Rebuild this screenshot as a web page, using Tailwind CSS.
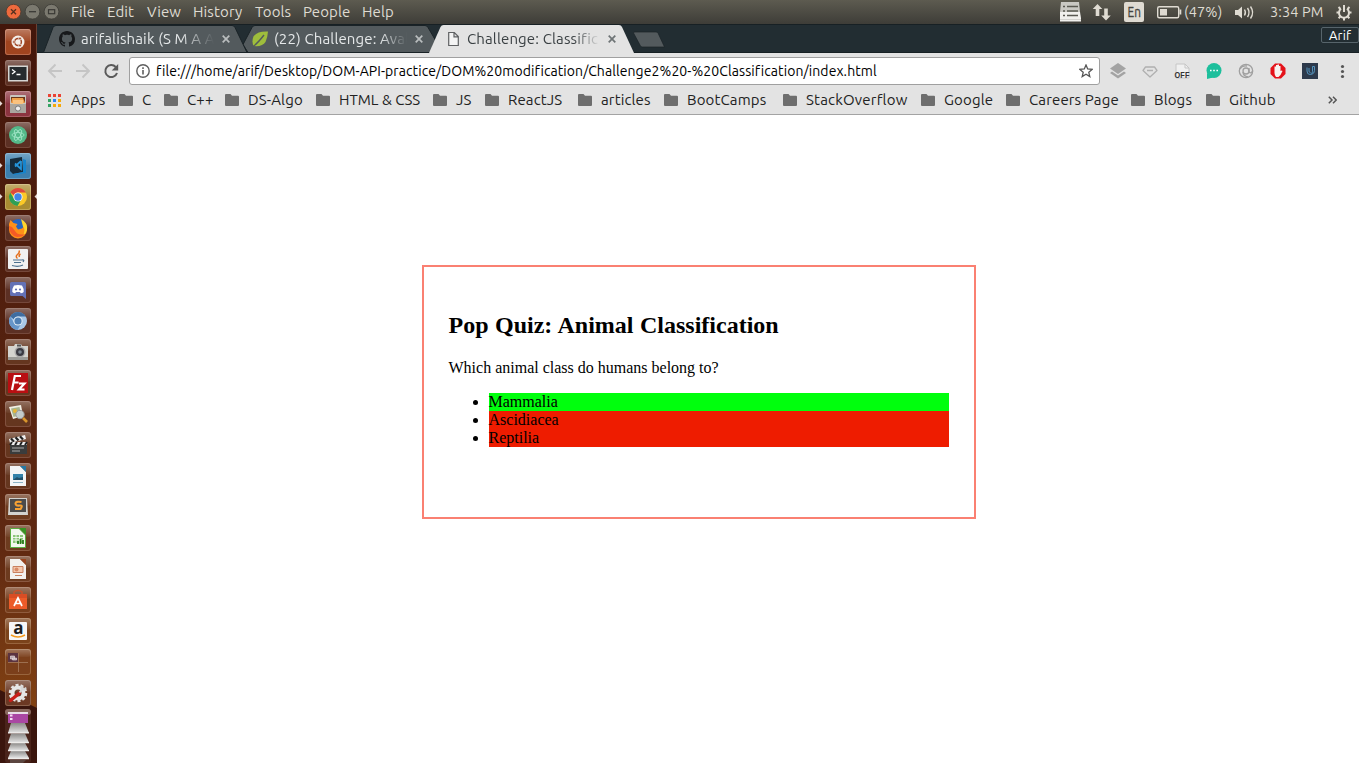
<!DOCTYPE html>
<html lang="en">
<head>
<meta charset="utf-8">
<title>Challenge: Classification</title>
<script src="https://cdn.jsdelivr.net/npm/@tailwindcss/browser@4"></script>
</head>
<body class="w-[1359px] h-[763px] overflow-hidden flex flex-col bg-white font-['Ubuntu','Noto_Sans',sans-serif] text-[15px] tracking-[0.13px] whitespace-nowrap">
<svg class="absolute size-0">
  <defs>
    <symbol id="folder" viewBox="0 0 14 12"><path d="M1 0h4.5L7 1.8h6a1 1 0 0 1 1 1V11a1 1 0 0 1-1 1H1a1 1 0 0 1-1-1V1a1 1 0 0 1 1-1z" fill="#6e6e6e"/></symbol>
    <symbol id="close" viewBox="0 0 8 8"><path d="M.7.7l6.6 6.6M7.3.7L.7 7.3" stroke="currentColor" stroke-width="1.7"/></symbol>
    <linearGradient id="shine" x1="0" y1="0" x2="0" y2="1"><stop offset="0" stop-color="#fff" stop-opacity=".3"/><stop offset="1" stop-color="#fff" stop-opacity=".04"/></linearGradient>
    <linearGradient id="paper" x1="0" y1="0" x2="0" y2="1"><stop offset="0" stop-color="#8c8a88"/><stop offset="1" stop-color="#e4e4e4"/></linearGradient>
  </defs>
</svg>

<!-- Top panel -->
<header class="h-6 shrink-0 flex items-center bg-linear-to-b from-[#5d5b50] to-[#3e3d38] text-[#dfdbd2] leading-6">
  <svg class="w-[71px] h-6 shrink-0" viewBox="0 0 71 24">
    <circle cx="13.5" cy="11.7" r="7.4" fill="#ee6a3d" stroke="#4a3a30" stroke-width=".8"/><path d="M11 9.2l5 5M16 9.2l-5 5" stroke="#54301f" stroke-width="1.3"/>
    <circle cx="32.5" cy="11.7" r="7.4" fill="#7b796f" stroke="#3b3a35" stroke-width=".8"/><path d="M29 11.7h7" stroke="#3a3935" stroke-width="1.3"/>
    <circle cx="51.5" cy="11.7" r="7.4" fill="#7b796f" stroke="#3b3a35" stroke-width=".8"/><rect x="48.5" y="9.7" width="6.2" height="4" fill="none" stroke="#3a3935" stroke-width="1.2"/>
  </svg>
  <span class="w-9">File</span><span class="w-10">Edit</span><span class="w-[46px]">View</span><span class="w-[62px]">History</span><span class="w-12">Tools</span><span class="w-[59px]">People</span><span>Help</span>
  <div class="ml-auto flex items-center text-[14.5px]">
    <svg class="w-[124px] h-6" viewBox="1059 0 124 24">
      <path d="M1061 2h18l1 10h-20z" fill="#c9c8c3"/><path d="M1060 12h20l1 6v3.500h-21z" fill="#f1f0ed"/><path d="M1063 6.500h2M1067 6.500h11M1063 11h2M1067 11h11M1063 15.500h2M1067 15.500h11" stroke="#5a5952" stroke-width="1.500"/><path d="M1060 19.500h21" stroke="#d4d3cf"/>
      <path d="M1097.500 4l4.800 5h-3v7h-3.600V9h-3zM1106 20.500l-4.800-5h3V8.500h3.600v7h3z" fill="#dfdbd2"/>
      <rect x="1124" y="2" width="20" height="20" rx="2" fill="#dfdbd2"/>
      <text x="1127.500" y="17" font-size="14" fill="#45443e" stroke="#45443e" stroke-width=".3" textLength="13.500" lengthAdjust="spacingAndGlyphs">En</text>
      <rect x="1157.700" y="6.700" width="21" height="11" rx="1.500" fill="none" stroke="#dfdbd2" stroke-width="1.400"/><path d="M1160 9h7v6.500h-7zM1179.500 9.500h1.800v5h-1.800z" fill="#dfdbd2"/>
    </svg>
    <span class="w-[51px] pl-px">(47%)</span>
    <svg class="w-[22px] h-6" viewBox="1234 0 22 24"><path d="M1235 10h3l4-3.500v12l-4-3.500h-3z" fill="#dfdbd2"/><path d="M1244.500 9.500q1.800 3 0 6M1247.500 8q3 4.500 0 9M1250.500 6.500q4.200 6 0 12" fill="none" stroke="#dfdbd2" stroke-width="1.400"/></svg>
    <span class="w-[80px] pl-[14px]">3:34 PM</span>
    <svg class="w-[23px] h-6" viewBox="1336 0 23 24"><g fill="none" stroke="#dfdbd2"><path d="M1341 8.800a5 5 0 1 0 6 0" stroke-width="2"/><path d="M1344 5v7M1339.500 12.500h-3M1351.500 12.500h-3M1340.800 16l-2.200 2.200M1347.200 16l2.200 2.200M1344 17.500v3M1340.500 9l-2-2M1347.500 9l2-2" stroke-width="2"/></g></svg>
  </div>
</header>

<div class="flex flex-1 min-h-0">
  <!-- Launcher -->
  <nav class="relative w-[37px] shrink-0 flex flex-col items-start pl-[5px] pt-[5px] gap-[5px] bg-linear-to-b from-[#43160b] via-[#5f2811] via-70% to-[#8d4a12] border-r border-[#6b4032]">
    <svg class="absolute left-0 top-[666px] w-[37px] h-[73px]" viewBox="0 0 37 73"><path d="M0 0L37 18V73H0z" fill="#3a150d"/></svg>
    <svg class="absolute left-0 top-0 w-[37px] h-[200px]" viewBox="0 24 37 200"><path d="M0 101l2.500 2.500L0 106zM0 163l2.500 2.500L0 168zM0 194l2.500 2.500L0 199zM37 194l-2.500 2.500L37 199z" fill="#e8dcd8"/></svg>

    <div class="relative size-[26px] rounded-[3px] bg-[#a0441f] shadow-[inset_0_0_0_1px_#b96a4c]"><svg viewBox="0 0 26 26"><rect width="26" height="12" rx="3" fill="url(#shine)"/><circle cx="13" cy="13" r="6.500" fill="#f4eee9"/><circle cx="13" cy="13" r="3.400" fill="none" stroke="#a04727" stroke-width="1.500"/><g fill="#a04727" stroke="#f4eee9" stroke-width=".7"><circle cx="9" cy="13" r="1.400"/><circle cx="15" cy="9.500" r="1.400"/><circle cx="15" cy="16.500" r="1.400"/></g></svg></div>
    <div class="relative size-[26px] rounded-[3px] bg-[#5c3024] shadow-[inset_0_0_0_1px_#75483b]"><svg viewBox="0 0 26 26"><rect width="26" height="12" rx="3" fill="url(#shine)"/><rect x="3" y="5.500" width="20" height="16" fill="#d5d5d2"/><rect x="4.500" y="7" width="17" height="13" fill="#262b2e"/><path d="M7 9.500l3 2.200L7 13.900M11.500 14.500h4" fill="none" stroke="#fff" stroke-width="1.300"/></svg></div>
    <div class="relative size-[26px] rounded-[3px] bg-[#8c3440] shadow-[inset_0_0_0_1px_#a55a62]"><svg viewBox="0 0 26 26"><rect width="26" height="12" rx="3" fill="url(#shine)"/><rect x="5" y="4" width="16" height="18" rx="1" fill="#c9c5bf"/><path d="M6 6h14v6H6z" fill="#6b3518"/><path d="M7 7h11l2 5H6z" fill="#f0a04b"/><path d="M8 9h10v4H8z" fill="#fac27e"/><rect x="5" y="13" width="16" height="9" fill="#aaa69f"/><circle cx="13" cy="17.500" r="2.600" fill="#eee" stroke="#777"/></svg></div>
    <div class="relative size-[26px] rounded-[3px] bg-[#5c3024] shadow-[inset_0_0_0_1px_#75483b]"><svg viewBox="0 0 26 26"><rect width="26" height="12" rx="3" fill="url(#shine)"/><circle cx="13" cy="13" r="9" fill="#54b989"/><g fill="none" stroke="#a5e7ca" stroke-width=".8"><ellipse cx="13" cy="13" rx="6" ry="2.500"/><ellipse cx="13" cy="13" rx="6" ry="2.500" transform="rotate(60 13 13)"/><ellipse cx="13" cy="13" rx="6" ry="2.500" transform="rotate(120 13 13)"/></g></svg></div>
    <div class="relative size-[26px] rounded-[3px] bg-[#3c7fae] shadow-[inset_0_0_0_1px_#669dc1]"><svg viewBox="0 0 26 26"><rect width="26" height="12" rx="3" fill="url(#shine)"/><path d="M5 6l12-2 1 15-10 2-3-3z" fill="#162b3b"/><path d="M18 6l3 1v13l-12 2-1-1 10-2z" fill="#1684cc"/><path d="M16 8v8l-6-5.500M16 8l-6 5.500" fill="none" stroke="#2595db" stroke-width="1.700"/></svg></div>
    <div class="relative size-[26px] rounded-[3px] bg-[#a98c32] shadow-[inset_0_0_0_1px_#c0a75a]"><svg viewBox="0 0 26 26"><rect width="26" height="12" rx="3" fill="url(#shine)"/><circle cx="13" cy="13" r="9" fill="#fbc927"/><path d="M5.200 8.500A9 9 0 0 1 20.800 8.500H13a4.500 4.500 0 0 0-4 3z" fill="#dd4a3e"/><path d="M5.200 8.500A9 9 0 0 0 12.500 22l4-6.800a4.500 4.500 0 0 1-7.300-.2z" fill="#2f9f55"/><circle cx="13" cy="13" r="4.600" fill="#f5f5f5"/><circle cx="13" cy="13" r="3.700" fill="#4285e8"/></svg></div>
    <div class="relative size-[26px] rounded-[3px] bg-[#5c3024] shadow-[inset_0_0_0_1px_#75483b]"><svg viewBox="0 0 26 26"><rect width="26" height="12" rx="3" fill="url(#shine)"/><circle cx="13.500" cy="12.500" r="8.500" fill="#2765c0"/><path d="M4 9l1.500-4 3 3 4 1-1.500 2.500 2 3 4-1q3-2 1-8 5 4 4 9a9 9 0 0 1-18 0z" fill="#ff9018"/><path d="M16 4q7 4 6 11-1 4-4 5.500 3-6 0-9z" fill="#ffd52e"/><path d="M4 11q0 9 8 11 6 0 8-3-7 2-10-3l-3-4z" fill="#f45b26"/></svg></div>
    <div class="relative size-[26px] rounded-[3px] bg-[#5c3024] shadow-[inset_0_0_0_1px_#75483b]"><svg viewBox="0 0 26 26"><rect width="26" height="12" rx="3" fill="url(#shine)"/><rect x="3" y="3" width="20" height="20" rx="1" fill="#f1f1f1"/><path d="M14 4.500q1 2-1.500 4t0 4M15.500 8q-2 1.200-1 3" fill="none" stroke="#e4701e" stroke-width="1.500"/><path d="M8 14h9M9 16.500h7M7 19.500q6 1.800 11-.5M17 14q3-.5 1 2" fill="none" stroke="#4c708e" stroke-width="1.200"/></svg></div>
    <div class="relative size-[26px] rounded-[3px] bg-[#5c3024] shadow-[inset_0_0_0_1px_#75483b]"><svg viewBox="0 0 26 26"><rect width="26" height="12" rx="3" fill="url(#shine)"/><path d="M6.500 5h13a1.500 1.500 0 0 1 1.500 1.500V22l-3.500-3h-11A1.500 1.500 0 0 1 5 17.500v-11A1.500 1.500 0 0 1 6.500 5z" fill="#6371b5"/><path d="M9 8.500q4-1 8 0 2 3 1.700 6.500-1.500 1.300-3 1.300l-.7-1.300h-4l-.7 1.300q-1.500 0-3-1.300Q7 11.500 9 8.500z" fill="#fff"/><circle cx="11" cy="12.500" r="1.100" fill="#6371b5"/><circle cx="15" cy="12.500" r="1.100" fill="#6371b5"/></svg></div>
    <div class="relative size-[26px] rounded-[3px] bg-[#5c3024] shadow-[inset_0_0_0_1px_#75483b]"><svg viewBox="0 0 26 26"><rect width="26" height="12" rx="3" fill="url(#shine)"/><circle cx="13" cy="13" r="9" fill="#a9c8e8"/><path d="M5.200 8.500A9 9 0 0 1 20.800 8.500H13a4.500 4.500 0 0 0-4 3z" fill="#3f6da0"/><path d="M5.200 8.500A9 9 0 0 0 12.500 22l4-6.800a4.500 4.500 0 0 1-7.300-.2z" fill="#6796c9"/><circle cx="13" cy="13" r="4.600" fill="#e4eef6"/><circle cx="13" cy="13" r="3.600" fill="#4f80b5"/></svg></div>
    <div class="relative size-[26px] rounded-[3px] bg-[#65361f] shadow-[inset_0_0_0_1px_#80503e]"><svg viewBox="0 0 26 26"><rect width="26" height="12" rx="3" fill="url(#shine)"/><path d="M3 7h6l1-2h6l1 2h6v14H3z" fill="#d4d4cf"/><path d="M3 18h20v3H3z" fill="#9b9b97"/><circle cx="15" cy="13" r="5.500" fill="#aaa"/><circle cx="15" cy="13" r="4" fill="#3a3a42"/><circle cx="15" cy="13" r="1.800" fill="#7d8690"/><path d="M12 5.500h4v2h-4z" fill="#555"/></svg></div>
    <div class="relative size-[26px] rounded-[3px] bg-[#65361f] shadow-[inset_0_0_0_1px_#80503e]"><svg viewBox="0 0 26 26"><rect width="26" height="12" rx="3" fill="url(#shine)"/><rect x="3" y="3" width="20" height="20" fill="#b90f12"/><path d="M7 20L9.800 6H16M8.600 12.500h5M14 13.500h5.500L14 19.500h5.500" fill="none" stroke="#fff" stroke-width="2.200"/></svg></div>
    <div class="relative size-[26px] rounded-[3px] bg-[#65361f] shadow-[inset_0_0_0_1px_#80503e]"><svg viewBox="0 0 26 26"><rect width="26" height="12" rx="3" fill="url(#shine)"/><path d="M4 6l12-2 2 11-10 3z" fill="#f1efe4"/><path d="M6 7.500l8.500-1.500 1.500 8-7.500 2z" fill="#a9b58d"/><circle cx="10" cy="10" r="2" fill="#e8b434"/><circle cx="15" cy="13.500" r="4.200" fill="#c3ccca" stroke="#999"/><path d="M18 17l4 4" stroke="#d9962c" stroke-width="2.600"/></svg></div>
    <div class="relative size-[26px] rounded-[3px] bg-[#65361f] shadow-[inset_0_0_0_1px_#80503e]"><svg viewBox="0 0 26 26"><rect width="26" height="12" rx="3" fill="url(#shine)"/><path d="M4 7l16-4 1 4-16 4z" fill="#f0f0f0"/><path d="M6 6.500l3 3.300M10.500 5.300l3 3.300M15 4.200l3 3.300" stroke="#222" stroke-width="2.200"/><path d="M5 10h17v12H5z" fill="#3a3c3c"/><path d="M5 10h17v3H5z" fill="#eee"/><path d="M7 10l-2 3M12 10l-2 3M17 10l-2 3M22 10l-2 3" stroke="#222" stroke-width="2"/><path d="M7 16h12M7 19h8" stroke="#aaa"/></svg></div>
    <div class="relative size-[26px] rounded-[3px] bg-[#65361f] shadow-[inset_0_0_0_1px_#80503e]"><svg viewBox="0 0 26 26"><rect width="26" height="12" rx="3" fill="url(#shine)"/><path d="M5 3h10l6 6v14H5z" fill="#f3f5f6"/><path d="M15 3h6v6z" fill="#2779a4"/><rect x="8" y="11" width="10" height="6" fill="#3282aa"/><path d="M8 17l4-3 2 1 4-1v3z" fill="#20506a"/><path d="M8 19.500h10" stroke="#8cb3c6"/></svg></div>
    <div class="relative size-[26px] rounded-[3px] bg-[#6d3b1f] shadow-[inset_0_0_0_1px_#8a5840]"><svg viewBox="0 0 26 26"><rect width="26" height="12" rx="3" fill="url(#shine)"/><path d="M4 4h18l1 17H3z" fill="#d2d2cf"/><path d="M5 5h16v13H5z" fill="#4b4b4b"/><path d="M16.500 8q-6-1-6 1.500t4 2 1 3.500h-5.500" fill="none" stroke="#f6a132" stroke-width="2.100"/></svg></div>
    <div class="relative size-[26px] rounded-[3px] bg-[#6d3b1f] shadow-[inset_0_0_0_1px_#8a5840]"><svg viewBox="0 0 26 26"><rect width="26" height="12" rx="3" fill="url(#shine)"/><path d="M5.500 3.500H14l6.500 6.500v12.500h-15z" fill="#f2f7ee" stroke="#58ad3f"/><path d="M14 3h7v7z" fill="#369422"/><path d="M8 10h10v8H8z" fill="#8cc578"/><path d="M8 12.500h10M8 15h10M11 10v8M14.500 10v8" stroke="#fff" stroke-width=".8"/><path d="M13 19v-3M15.500 19v-5M18 19v-4" stroke="#287d1b" stroke-width="1.800"/></svg></div>
    <div class="relative size-[26px] rounded-[3px] bg-[#6d3b1f] shadow-[inset_0_0_0_1px_#8a5840]"><svg viewBox="0 0 26 26"><rect width="26" height="12" rx="3" fill="url(#shine)"/><path d="M5 3h10l6 6v14H5z" fill="#f3f1ee"/><path d="M15 3h6v6z" fill="#98441f"/><path d="M8 10.500h10v6H8z" fill="#f4c8ae" stroke="#c9805f"/><circle cx="11.500" cy="13.500" r="2" fill="#d98b68"/><path d="M10 19.500h7" stroke="#c9805f"/></svg></div>
    <div class="relative size-[26px] rounded-[3px] bg-[#753d1c] shadow-[inset_0_0_0_1px_#905c3e]"><svg viewBox="0 0 26 26"><rect width="26" height="12" rx="3" fill="url(#shine)"/><path d="M9 8V5q4-3 8 0v3" fill="none" stroke="#ca512b" stroke-width="1.500"/><path d="M4 7h18v15H4z" fill="#ec5b29"/><path d="M4 7h18v4H4z" fill="#d94d24"/><path d="M9 19l4-8 4 8M10 16.500h6" fill="none" stroke="#fff" stroke-width="1.700"/></svg></div>
    <div class="relative size-[26px] rounded-[3px] bg-[#7b431b] shadow-[inset_0_0_0_1px_#98643d]"><svg viewBox="0 0 26 26"><rect width="26" height="12" rx="3" fill="url(#shine)"/><rect x="4" y="4" width="18" height="18" rx="1" fill="#f7f7f7"/><text x="8.300" y="15.500" font-size="17" font-weight="700" fill="#1d1d1d" font-family="Open Sans">a</text><path d="M6 17q7 4 14 0" fill="none" stroke="#f49a1b" stroke-width="1.500"/></svg></div>
    <div class="relative size-[26px] rounded-[3px] bg-[#7b3f1b] shadow-[inset_0_0_0_1px_#98643d]"><svg viewBox="0 0 26 26"><rect width="26" height="8" rx="3" fill="url(#shine)"/><rect x="3" y="4" width="10" height="9" fill="#5b3340"/><path d="M13.500 4v19M3 13.500h20" stroke="#a67b5e" stroke-width=".8"/><path d="M5.500 7h4v3h-4zM7.500 9h4v2h-4z" fill="#b6a2a8" stroke="#efe5e7" stroke-width=".6"/></svg></div>
    <div class="relative size-[26px] rounded-[3px] bg-[#6b3823] shadow-[inset_0_0_0_1px_#89604b]"><svg viewBox="0 0 26 26"><rect width="26" height="12" rx="3" fill="url(#shine)"/><circle cx="13" cy="13" r="8" fill="none" stroke="#e3e3e3" stroke-width="2.500" stroke-dasharray="3 2"/><circle cx="13" cy="13" r="5.500" fill="none" stroke="#e6e6e6" stroke-width="4"/><path d="M5.500 20.500l9-7.500" stroke="#c91f1a" stroke-width="3.400" stroke-linecap="round"/><path d="M14.500 12.500l4-5M16.500 6v3l3 .5 1.500-2" fill="none" stroke="#d6d6d6" stroke-width="2"/></svg></div>
    <svg class="absolute left-[5px] top-[685px] w-[27px] h-[54px]" viewBox="0 0 27 54"><rect width="26" height="54" rx="3" fill="#4a241b"/><rect width="26" height="6" rx="3" fill="#8a6a60"/><path d="M3 3h20v2H3z" fill="#e8dfe7"/><path d="M3 5h20v9H3z" fill="#aa47a3"/><path d="M5 6.500h2.500M5 10h2.500" stroke="#f3ddf1" stroke-width="2"/>
      <g fill="url(#paper)"><path d="M6 14h14l4 10H3z"/><path d="M6 24.500h14l4 9H3z"/><path d="M6 34h14l4 7.500H3z"/><path d="M6 42h14l4 7H3z"/></g><path d="M3 23.300h21v1.200H3zM3 33h21v1.200H3zM3 41h21v1.200H3zM3 49h21v1.200H3z" fill="#eeecea"/><path d="M5 51h16l-3 3H5z" fill="#5b4640"/></svg>
  </nav>

  <div class="flex-1 min-w-0 flex flex-col">
    <!-- Tab strip -->
    <div class="relative h-[29px] shrink-0 bg-[#222d32] flex">
      <svg class="absolute inset-0 w-[1322px] h-[29px]" viewBox="37 24 1322 29">
        <path d="M37 52.500H1359M37 24.500H1359" stroke="#172024"/>
        <path d="M248 52.500l-5-8 9-17q1-2 3-2h170q2 0 3 2l10 17-7 8z" fill="#535a5d" stroke="#1a2327"/>
        <path d="M43.500 52.500L53 27.500q1-2 3-2h176q2 0 3 2l12 25z" fill="#535a5d" stroke="#1a2327"/>
        <path d="M429 53l11.500-26q1-2 3-2H619q2 0 3 2l12 26z" fill="#e3e3e3"/>
        <path d="M634 32h22q1.500 0 2 1l6.500 14h-22q-1.500 0-2-1l-7-13z" fill="#535a5d" stroke="#1a2327" stroke-width=".7"/>
      </svg>
      <div class="relative w-[193px] pl-[22px] flex items-center">
        <svg class="size-4 shrink-0 text-[#17191b]" viewBox="0 0 16 16"><path fill="currentColor" d="M8 0C3.580 0 0 3.580 0 8c0 3.540 2.290 6.530 5.470 7.590.4.070.55-.17.55-.38 0-.19-.01-.82-.01-1.490-2.010.37-2.530-.49-2.690-.94-.09-.23-.48-.94-.82-1.130-.28-.15-.68-.52-.01-.53.63-.01 1.080.58 1.230.82.72 1.210 1.870.87 2.330.66.070-.52.280-.87.510-1.070-1.780-.2-3.640-.89-3.640-3.950 0-.87.310-1.590.82-2.150-.08-.2-.36-1.020.08-2.120 0 0 .67-.21 2.200.82.640-.18 1.320-.27 2-.27s1.360.09 2 .27c1.530-1.040 2.200-.82 2.200-.82.440 1.100.16 1.920.08 2.120.51.560.82 1.270.82 2.150 0 3.070-1.870 3.750-3.650 3.950.29.250.54.730.54 1.480 0 1.070-.01 1.930-.01 2.200 0 .21.150.46.55.38A8.010 8.010 0 0 0 16 8c0-4.420-3.580-8-8-8z"/></svg>
        <span class="ml-[6px] mt-[2px] w-[133px] text-[#e5e8e9] mask-r-from-75%">arifalishaik (S M A A</span>
        <svg class="ml-[8px] size-2 shrink-0 text-[#b9bdbe]"><use href="#close"/></svg>
      </div>
      <div class="relative w-[193px] pl-[22px] flex items-center">
        <svg class="size-4 shrink-0" viewBox="0 0 16 16"><path d="M16 .5Q5 0 1.500 5.500-.5 10 1.500 15q9 1 12-4Q15.500 7 16 .5z" fill="#9ebd3c"/><path d="M1 15.500Q6 12 12 4" stroke="#535a5d" stroke-width="1.300" fill="none"/></svg>
        <span class="ml-[6px] mt-[2px] w-[133px] text-[#e5e8e9] mask-r-from-80%">(22) Challenge: Aval</span>
        <svg class="ml-[8px] size-2 shrink-0 text-[#b9bdbe]"><use href="#close"/></svg>
      </div>
      <div class="relative w-[193px] pl-[22px] flex items-center">
        <svg class="size-4 shrink-0" viewBox="0 0 16 16"><path d="M3.700 1.500h5.600l4 4v9H3.700z M9 1.500v4.300h4.300" fill="#f4f4f4" stroke="#5f6163" stroke-width="1.200"/></svg>
        <span class="ml-[6px] mt-[2px] w-[133px] text-[#3a4043] [font-variant-ligatures:none] mask-r-from-80%">Challenge: Classific</span>
        <svg class="ml-[8px] size-2 shrink-0 text-[#6e7476]"><use href="#close"/></svg>
      </div>
      <div class="relative ml-auto mt-[3px] h-4 w-[38px] border border-[#57646b] rounded-[2px] text-white text-[13px] leading-[14px] pl-[7px]">Arif</div>
    </div>

    <!-- Toolbar -->
    <div class="h-[35px] shrink-0 bg-[#e3e3e3] flex items-center pt-px">
      <svg class="w-[92px] h-8 shrink-0" viewBox="37 55 92 32"><g fill="none" stroke="#c5c5c5" stroke-width="1.900"><path d="M62 71H49.500M55.500 64.500L49 71l6.500 6.500M76 71h12.500M82.500 64.500L89 71l-6.500 6.500"/></g><path d="M115.700 67A6 6 0 1 0 117 73" fill="none" stroke="#5a5a5a" stroke-width="2"/><path d="M118.200 64v6.500h-6.500z" fill="#5a5a5a"/></svg>
      <div class="w-[971px] h-7 bg-white border border-[#a0a0a0] rounded-[3px] flex items-center pl-[6px] pr-[6px]">
        <svg class="size-[14px] shrink-0" viewBox="0 0 14 14"><circle cx="7" cy="7" r="6.200" fill="none" stroke="#5f5f5f" stroke-width="1.400"/><path d="M7 6v4.500M7 3.200v1.700" stroke="#5f5f5f" stroke-width="1.600"/></svg>
        <span class="ml-[6px] text-[14px] tracking-[0.085px] text-black [font-variant-ligatures:none]">file:///home/arif/Desktop/DOM-API-practice/DOM%20modification/Challenge2%20-%20Classification/index.html</span>
        <svg class="ml-auto size-[14px] shrink-0" viewBox="0 0 14 14"><path d="M7 1l1.700 4 4.500.4-3.400 2.900 1 4.300L7 10.300l-3.800 2.300 1-4.300L.8 5.400 5.300 5z" fill="none" stroke="#555" stroke-width="1.300"/></svg>
      </div>
      <svg class="w-[259px] h-8 shrink-0" viewBox="1100 55 259 32">
        <path d="M1118 63l8 5.500-8 5.500-8-5.500z" fill="#a3a3a3"/><path d="M1110 73l8 5.500 8-5.500-2-1.400-6 4-6-4z" fill="#a3a3a3"/>
        <path d="M1145.500 67h9l2.500 3.500-7 6.500-7-6.500zM1147 70.500h6" fill="none" stroke="#b0b0b0" stroke-width="1.300" stroke-linejoin="round"/>
        <path d="M1176 64h9l4 4v10h-13z" fill="#f0f0f0" stroke="#c6c6c6"/><path d="M1185 64v4h4" fill="none" stroke="#c6c6c6"/><text x="1174.500" y="78" font-size="8.500" font-weight="700" textLength="15" lengthAdjust="spacingAndGlyphs" fill="#333" font-family="Liberation Sans">OFF</text>
        <circle cx="1214" cy="70.500" r="7.500" fill="#1dbf9c"/><path d="M1207 73v6l6-1.500z" fill="#1dbf9c"/><path d="M1210 70.500h1.600M1213.200 70.500h1.600M1216.400 70.500h1.600" stroke="#fff" stroke-width="1.600"/>
        <g fill="none" stroke="#a0a0a0" stroke-width="1.300"><circle cx="1246" cy="71" r="6.700"/><circle cx="1246" cy="71" r="3"/><path d="M1249 68v4q2 2 3.500-1M1243 72q0 4 5 5M1240 69q2-4 7-3"/></g>
        <path d="M1275 63.500h6l4.500 4.500v6l-4.500 4.500h-6l-4.500-4.500v-6z" fill="#e4121a"/><path d="M1274.500 70v-3.500h1.500V65h1.500v-.5h1.500V66h1.500v5l1-.5 1 .5-2 4-2 2h-2.500q-1.500-2-1.500-4z" fill="#f7f3f1"/>
        <rect x="1302" y="63" width="16" height="16" fill="#2d3a4c"/><path d="M1307 67.500v3.500q0 3.500 3 3.500 2.500 0 2.500-3v-5M1309 68v3q0 1.500 1.500 1.500M1312.500 66.500h2v4q0 3-3 4" fill="none" stroke="#5393bd" stroke-width="1"/>
        <g fill="#555"><circle cx="1342.500" cy="66.500" r="1.600"/><circle cx="1342.500" cy="71.500" r="1.600"/><circle cx="1342.500" cy="76.500" r="1.600"/></g>
      </svg>
    </div>

    <!-- Bookmarks -->
    <div class="h-[27px] shrink-0 bg-[#e3e3e3] border-b border-[#a3a3a3] flex items-center pl-[11px] pb-[2px] text-[#222]">
      <div class="w-[71px] flex items-center gap-[10px]"><svg class="size-[13px]" viewBox="0 0 13 13"><path d="M0 0h3v3H0zM5 0h3v3H5zM10 0h3v3h-3z" fill="#ea4335"/><path d="M0 5h3v3H0zM0 10h3v3H0z" fill="#34a363"/><path d="M5 5h3v3H5z" fill="#2a84f5"/><path d="M10 5h3v3h-3zM5 10h3v3H5zM10 10h3v3h-3z" fill="#f5a90b"/></svg>Apps</div>
      <div class="w-[45px] flex items-center gap-[9px]"><svg class="w-[14px] h-3"><use href="#folder"/></svg>C</div>
      <div class="w-[61px] flex items-center gap-[9px]"><svg class="w-[14px] h-3"><use href="#folder"/></svg>C++</div>
      <div class="w-[91px] flex items-center gap-[9px]"><svg class="w-[14px] h-3"><use href="#folder"/></svg>DS-Algo</div>
      <div class="w-[117px] flex items-center gap-[9px] tracking-normal"><svg class="w-[14px] h-3"><use href="#folder"/></svg>HTML &amp; CSS</div>
      <div class="w-[52px] flex items-center gap-[9px]"><svg class="w-[14px] h-3"><use href="#folder"/></svg>JS</div>
      <div class="w-[93px] flex items-center gap-[9px]"><svg class="w-[14px] h-3"><use href="#folder"/></svg>ReactJS</div>
      <div class="w-[86px] flex items-center gap-[9px]"><svg class="w-[14px] h-3"><use href="#folder"/></svg>articles</div>
      <div class="w-[119px] flex items-center gap-[9px]"><svg class="w-[14px] h-3"><use href="#folder"/></svg>BootCamps</div>
      <div class="w-[138px] flex items-center gap-[9px] tracking-[0.2px]"><svg class="w-[14px] h-3"><use href="#folder"/></svg>StackOverflow</div>
      <div class="w-[85px] flex items-center gap-[9px]"><svg class="w-[14px] h-3"><use href="#folder"/></svg>Google</div>
      <div class="w-[125px] flex items-center gap-[9px]"><svg class="w-[14px] h-3"><use href="#folder"/></svg>Careers Page</div>
      <div class="w-[75px] flex items-center gap-[9px]"><svg class="w-[14px] h-3"><use href="#folder"/></svg>Blogs</div>
      <div class="flex items-center gap-[9px] tracking-[0.25px]"><svg class="w-[14px] h-3"><use href="#folder"/></svg>Github</div>
      <svg class="ml-auto mr-[22px] w-[9px] h-2" viewBox="0 0 9 8"><path d="M.8.8L4 4 .8 7.200M5 .8L8.200 4 5 7.200" fill="none" stroke="#555" stroke-width="1.500"/></svg>
    </div>

    <!-- Page -->
    <main class="flex-1 bg-white pt-[150px] pl-[385px] font-['Liberation_Serif',serif] text-black text-base leading-[18px] tracking-normal">
      <section class="w-[554px] h-[254px] border-2 border-[#fa8072] pl-[24.5px] pr-[25px] py-[25px]">
        <h2 class="mt-5 text-2xl leading-[27px] font-bold [word-spacing:0.5px]">Pop Quiz: Animal Classification</h2>
        <p class="mt-5">Which animal class do humans belong to?</p>
        <ul class="mt-4 pl-10 list-disc">
          <li class="bg-[#00ff0d]">Mammalia</li>
          <li class="bg-[#ee1c00]">Ascidiacea</li>
          <li class="bg-[#ee1c00]">Reptilia</li>
        </ul>
      </section>
    </main>
  </div>
</div>
</body>
</html>
